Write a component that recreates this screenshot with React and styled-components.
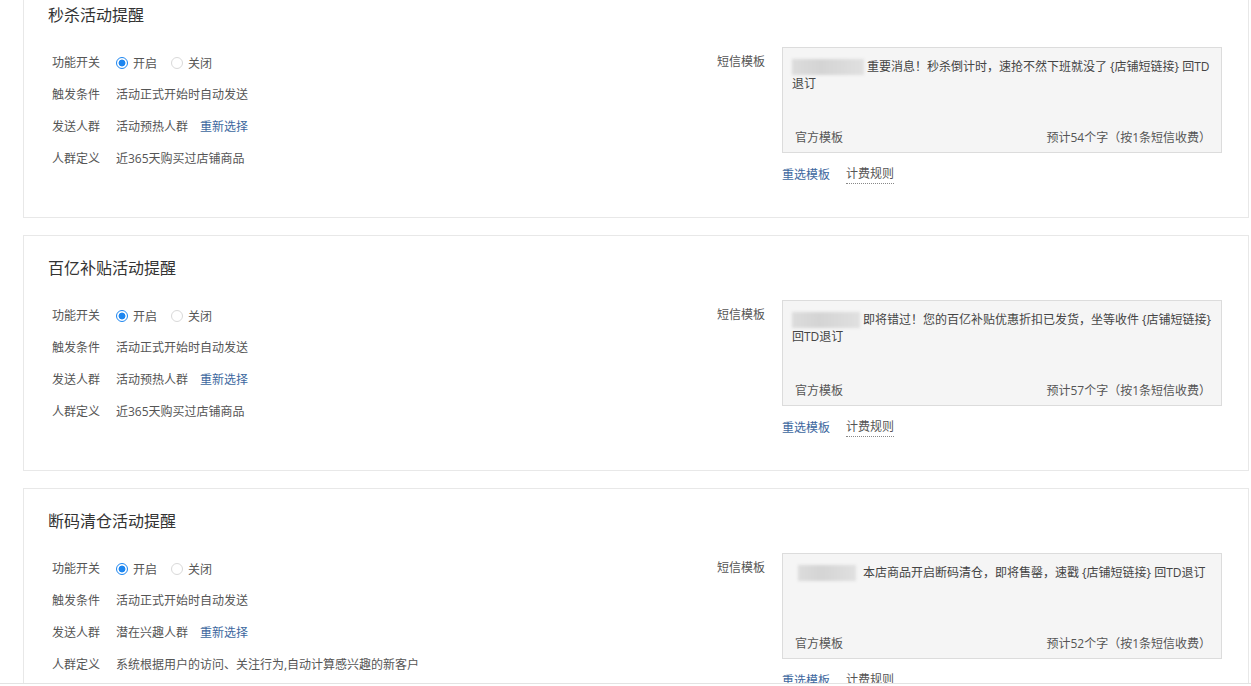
import styled, { createGlobalStyle } from 'styled-components';

const GlobalStyle = createGlobalStyle`
  html, body {
    margin: 0;
    padding: 0;
    background: #fff;
    font-family: 'Open Sans', 'Noto Sans CJK SC', sans-serif;
    font-size: 12px;
    color: #555;
  }
`;

const Viewport = styled.div`
  height: 683px;
  overflow: hidden;
  border-bottom: 1px solid #e3e3e3;
`;

const List = styled.div`
  margin-top: -18px;
  display: flex;
  flex-direction: column;
  gap: 17px;
`;

const Card = styled.section`
  box-sizing: border-box;
  height: 236px;
  margin: 0 2px 0 23px;
  padding: 0 26px 0 24px;
  border: 1px solid #e8e8e8;
`;

const Title = styled.h2`
  margin: 20px 0 0;
  font-size: 16px;
  font-weight: 400;
  line-height: 24px;
  color: #333;
`;

const Body = styled.div`
  display: flex;
  margin-top: 19px;
`;

const Fields = styled.div`
  flex: 1;
  padding-left: 4px;
`;

const Row = styled.div`
  display: flex;
  align-items: center;
  height: 32px;
`;

const Label = styled.span`
  width: 64px;
  flex-shrink: 0;
  color: #555;
`;

const Value = styled.span`
  display: flex;
  align-items: center;
  gap: 12px;
  color: #555;
`;

const Link = styled.a`
  color: #3c679e;
  cursor: pointer;
`;

const Radio = styled.label`
  display: flex;
  align-items: center;
  gap: 5px;
  margin-right: 2px;
  padding-top: 2px;
  color: #555;

  &::before {
    content: '';
    box-sizing: border-box;
    width: 12px;
    height: 12px;
    border-radius: 50%;
    border: 1px solid ${(p) => (p.$checked ? '#1d86f0' : '#d9d9d9')};
    background: ${(p) =>
      p.$checked
        ? 'radial-gradient(circle, #1d86f0 0 3.2px, #fff 3.7px)'
        : '#fff'};
  }
`;

const Sms = styled.div`
  width: 505px;
  display: flex;
  flex-shrink: 0;
`;

const SmsLabel = styled.span`
  width: 65px;
  line-height: 32px;
  color: #555;
`;

const SmsSide = styled.div`
  flex: 1;
  padding-top: 1px;
`;

const SmsBox = styled.div`
  box-sizing: border-box;
  height: 106px;
  display: flex;
  flex-direction: column;
  justify-content: space-between;
  padding: 10px 10px 5px 9px;
  background: #f5f5f5;
  border: 1px solid #dcdcdc;
`;

const SmsText = styled.p`
  margin: 0;
  line-height: 17px;
  color: #444;
`;

const SmsLine = styled.span`
  display: block;
  white-space: nowrap;
`;

const Masked = styled.span`
  display: inline-block;
  width: ${(p) => p.$w}px;
  height: 16px;
  margin: 0 ${(p) => p.$gap}px 0 ${(p) => p.$left}px;
  vertical-align: -4px;
  background: linear-gradient(90deg, #dcdcdc, #d4d4d4 40%, #e0e0e0);
  filter: blur(1.5px);
`;

const SmsFoot = styled.div`
  display: flex;
  justify-content: space-between;
  padding-left: 3px;
  line-height: 18px;
  color: #555;
`;

const Actions = styled.div`
  display: flex;
  gap: 16px;
  margin-top: 13px;
  line-height: 18px;
`;

const Rule = styled.span`
  color: #555;
  border-bottom: 1px dotted #888;
  line-height: 16px;
`;

const cards = [
  {
    title: '秒杀活动提醒',
    crowd: '活动预热人群',
    define: '近365天购买过店铺商品',
    mask: { w: 72, left: 0, gap: 3 },
    lines: ['重要消息！秒杀倒计时，速抢不然下班就没了 {店铺短链接} 回TD', '退订'],
    count: 54,
  },
  {
    title: '百亿补贴活动提醒',
    crowd: '活动预热人群',
    define: '近365天购买过店铺商品',
    mask: { w: 68, left: 0, gap: 3 },
    lines: ['即将错过！您的百亿补贴优惠折扣已发货，坐等收件 {店铺短链接}', '回TD退订'],
    count: 57,
  },
  {
    title: '断码清仓活动提醒',
    crowd: '潜在兴趣人群',
    define: '系统根据用户的访问、关注行为,自动计算感兴趣的新客户',
    mask: { w: 58, left: 6, gap: 7 },
    lines: ['本店商品开启断码清仓，即将售罄，速戳 {店铺短链接} 回TD退订'],
    count: 52,
  },
];

const ActivityCard = ({ item }) => (
  <Card>
    <Title>{item.title}</Title>
    <Body>
      <Fields>
        <Row>
          <Label>功能开关</Label>
          <Value>
            <Radio $checked>开启</Radio>
            <Radio>关闭</Radio>
          </Value>
        </Row>
        <Row>
          <Label>触发条件</Label>
          <Value>活动正式开始时自动发送</Value>
        </Row>
        <Row>
          <Label>发送人群</Label>
          <Value>
            {item.crowd}
            <Link>重新选择</Link>
          </Value>
        </Row>
        <Row>
          <Label>人群定义</Label>
          <Value>{item.define}</Value>
        </Row>
      </Fields>
      <Sms>
        <SmsLabel>短信模板</SmsLabel>
        <SmsSide>
          <SmsBox>
            <SmsText>
              {item.lines.map((line, i) => (
                <SmsLine key={i}>
                  {i === 0 && (
                    <Masked $w={item.mask.w} $left={item.mask.left} $gap={item.mask.gap} />
                  )}
                  {line}
                </SmsLine>
              ))}
            </SmsText>
            <SmsFoot>
              <span>官方模板</span>
              <span>预计{item.count}个字（按1条短信收费）</span>
            </SmsFoot>
          </SmsBox>
          <Actions>
            <Link>重选模板</Link>
            <Rule>计费规则</Rule>
          </Actions>
        </SmsSide>
      </Sms>
    </Body>
  </Card>
);

const App = () => (
  <>
    <GlobalStyle />
    <Viewport>
      <List>
        {cards.map((c) => (
          <ActivityCard key={c.title} item={c} />
        ))}
      </List>
    </Viewport>
  </>
);

export default App;
